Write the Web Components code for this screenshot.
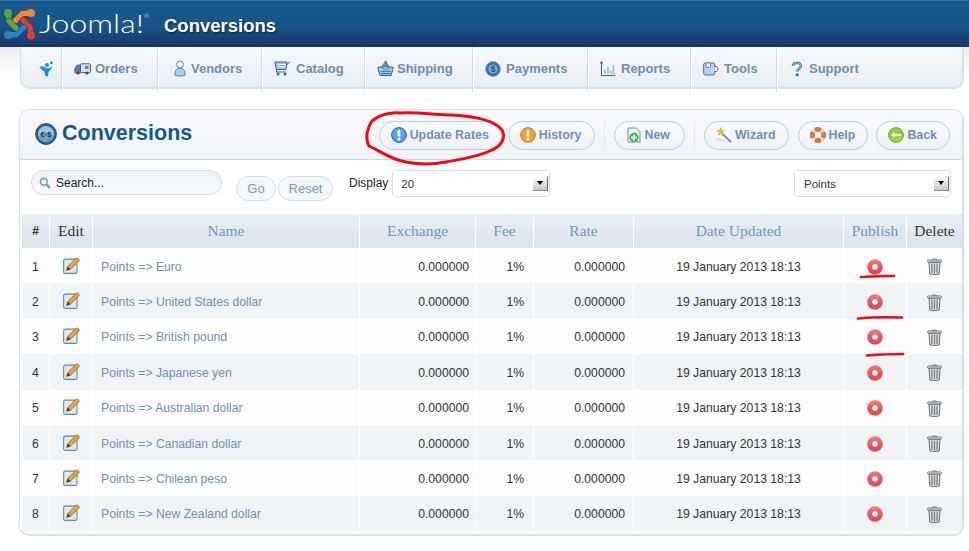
<!DOCTYPE html>
<html>
<head>
<meta charset="utf-8">
<title>Conversions</title>
<style>
  html, body { margin: 0; background: #fff; overflow: hidden; }
  body { font-family: "Liberation Sans", Arial, sans-serif; position: relative; width: 969px; height: 551px; }
</style>
</head>
<body>
<app-page></app-page>
<script>
const LOGO_PIECES = [
  ['M8 9 L9 17 L16 24', '#5aa63c'],
  ['M31 9 L22.5 9.5 L15.5 16.5', '#f08a2c'],
  ['M31 31 L30 23 L23 16', '#df3b3a'],
  ['M8 31 L16.5 30.5 L23.5 23.5', '#2e80c2'],
  ['M9 17 L16 24', '#5aa63c']
];

const ICONS = {
  logo: `<svg viewBox="4 5 31 31" fill="none" stroke-linecap="round" stroke-linejoin="round">
    ${LOGO_PIECES.map(([d, c]) => `<path d="${d}" stroke="#15477a" stroke-width="6.2"/><path d="${d}" stroke="${c}" stroke-width="5.4"/>`).join('')}
    <circle cx="8" cy="9" r="4" fill="#5aa63c"/><circle cx="31" cy="9" r="4" fill="#f08a2c"/>
    <circle cx="31" cy="31.5" r="4" fill="#df3b3a"/><circle cx="8" cy="31" r="4" fill="#2e80c2"/></svg>`,
  home: `<svg viewBox="0 0 14 16"><circle cx="8" cy="4" r="2" fill="#1690d8"/><circle cx="12.4" cy="1.8" r="1.4" fill="#1690d8"/><path d="M.6 6 C3 4.6 5 5.6 7.2 7 C9 7.6 11 7 13.4 5.4 C12.6 8 11 9.6 9.6 10.4 L9 15.6 L6.2 15 L5.4 10.6 C3.6 9.6 1.8 8 .6 6Z" fill="#1690d8"/></svg>`,
  orders: `<svg viewBox="0 0 17 12"><path d="M.5 6 L3 2 H6.5 V10 H1 Z" fill="#5f7f9f" stroke="#47617c" stroke-width=".7"/><rect x="6.5" y=".8" width="10" height="8.8" rx="1" fill="#d6e3ef" stroke="#3f6286"/><rect x="11" y="3" width="3.5" height="3" fill="#5a82a8"/><circle cx="4" cy="10" r="1.6" fill="#334b63"/><circle cx="13" cy="10" r="1.6" fill="#334b63"/></svg>`,
  vendors: `<svg viewBox="0 0 12 17"><circle cx="6" cy="4.4" r="3.4" fill="#e8f1f8" stroke="#5c8cb8"/><path d="M1 15 C.5 10 3 8.2 6 8.2 C9 8.2 11.5 10 11 15 C9 16.4 3 16.4 1 15Z" fill="#a9cdea" stroke="#4f86b8"/></svg>`,
  catalog: `<svg viewBox="0 0 17 15"><path d="M.8 1 H13 L12 8.5 H2.4 Z" fill="#9cc0de" stroke="#38678f"/><path d="M3 3.4 H12 M3.2 6 H11.6" stroke="#fff" stroke-width=".9"/><path d="M13 3.5 L16 .8" stroke="#38678f" fill="none"/><path d="M2.5 8.5 V11 H12" stroke="#38678f" fill="none"/><circle cx="4" cy="13" r="1.5" fill="#38678f"/><circle cx="11" cy="13" r="1.5" fill="#38678f"/></svg>`,
  shipping: `<svg viewBox="0 0 17 17"><path d="M8.5 .8 L12 7 H5 Z" fill="#5d8fbc" stroke="#2f5f8b" stroke-width=".7"/><path d="M.7 7.5 L4 6.8 L8.5 9.5 L13 6.8 L16.3 7.5 L14 15.5 H3Z" fill="#9cc4e4" stroke="#2f5f8b"/><path d="M3.5 11.5 H13.5 M4 13.5 H13" stroke="#2f5f8b" stroke-width=".8"/></svg>`,
  payments: `<svg viewBox="0 0 16 16"><circle cx="8" cy="8" r="7.4" fill="#3f76a6" stroke="#6f96b8" stroke-dasharray="1.4 .9"/><circle cx="8" cy="8" r="5" fill="#7fb0d8" stroke="#2d5f8c" stroke-width=".7"/><text x="8" y="11" font-size="8.5" font-weight="bold" text-anchor="middle" fill="#1e4b74" font-family="Liberation Sans">$</text></svg>`,
  reports: `<svg viewBox="0 0 16 16" fill="none" stroke="#3f6c96" stroke-width="1.1"><path d="M1.5 1 V14.5 H15"/><path d="M.3 2.4 L1.5 .8 L2.7 2.4"/><path d="M5 13 V8.5 M8 13 V6 M11 13 V9.5 M13.5 13 V4" stroke="#8db7da" stroke-width="1.4"/></svg>`,
  tools: `<svg viewBox="0 0 16 14"><rect x=".7" y="1" width="11" height="12" rx="1.6" fill="#b9d6ee" stroke="#3f6f9c"/><rect x="3" y="1" width="4.5" height="4.5" rx="1" fill="#fff" stroke="#3f6f9c" stroke-width=".8"/><path d="M11.5 4.5 H13 C15.8 4.5 15.8 9.5 13 9.5 H11.5" fill="#e8f1f8" stroke="#3f6f9c"/></svg>`,
  support: `<svg viewBox="0 0 12 16" fill="none"><path d="M2 5 C2 1 10 .6 10 4.8 C10 7.5 6.2 7.4 6.2 10.6" stroke="#3f6f9c" stroke-width="2.4"/><path d="M2 5 C2 1 10 .6 10 4.8 C10 7.5 6.2 7.4 6.2 10.6" stroke="#b9d6ee" stroke-width=".8"/><circle cx="6.2" cy="13.8" r="1.6" fill="#3f6f9c"/></svg>`,
  convert: `<svg viewBox="0 0 22 22"><circle cx="11" cy="11" r="10.4" fill="#2d5f8e" stroke="#1c4a73"/><circle cx="11" cy="11" r="8" fill="#9fc3e2"/><ellipse cx="11" cy="14" rx="7" ry="4.5" fill="#6f9fc8"/><text x="11" y="14" font-size="7.5" font-weight="bold" text-anchor="middle" fill="#123a5e" font-family="Liberation Sans">€·$</text></svg>`,
  infoBlue: `<svg viewBox="0 0 16 16"><circle cx="8" cy="8" r="7.4" fill="#5aa2ea" stroke="#1c5ea6"/><rect x="6.6" y="2.8" width="2.8" height="6.6" rx="1.2" fill="#fff"/><circle cx="8" cy="11.9" r="1.5" fill="#fff"/></svg>`,
  infoOrange: `<svg viewBox="0 0 16 16"><circle cx="8" cy="8" r="7.4" fill="#f5a02e" stroke="#d67a12"/><rect x="6.6" y="2.8" width="2.8" height="6.6" rx="1.2" fill="#fff"/><circle cx="8" cy="11.9" r="1.5" fill="#fff"/></svg>`,
  newDoc: `<svg viewBox="0 0 14 16"><path d="M1 1 H9.5 L13 4.5 V15 H1Z" fill="#eaf1f7" stroke="#6c8cab"/><circle cx="7" cy="10.4" r="4.6" fill="#3fb34a"/><path d="M7 7.4 V13.4 M4 10.4 H10" stroke="#e8f8e4" stroke-width="2"/></svg>`,
  wizard: `<svg viewBox="0 0 16 16"><path d="M6 6.5 L15 15" stroke="#8a929b" stroke-width="2.2"/><path d="M4.8 .6 L5.8 3.2 L8.6 3.4 L6.4 5.2 L7.2 7.9 L4.8 6.4 L2.4 7.9 L3.2 5.2 L1 3.4 L3.8 3.2Z" fill="#f0c030" stroke="#c58f1b" stroke-width=".5"/><path d="M.5 12 L9 14" stroke="#d8dde2" stroke-width="2"/></svg>`,
  help: `<svg viewBox="0 0 16 16"><circle cx="8" cy="8" r="5.6" fill="none" stroke="#b9a79c" stroke-width="4"/><circle cx="8" cy="8" r="5.6" fill="none" stroke="#f3ece7" stroke-width="2.6"/><g fill="#df7638" stroke="#b6572a" stroke-width=".5"><rect x="5.2" y=".5" width="5.6" height="3.8" rx="1"/><rect x="5.2" y="11.7" width="5.6" height="3.8" rx="1"/><rect x=".5" y="5.2" width="3.8" height="5.6" rx="1"/><rect x="11.7" y="5.2" width="3.8" height="5.6" rx="1"/></g></svg>`,
  back: `<svg viewBox="0 0 16 16"><circle cx="8" cy="8" r="7.4" fill="#95d23c" stroke="#66a81f"/><path d="M3 8 L6.6 5 V6.9 H13 V9.1 H6.6 V11Z" fill="#f2f9e2"/></svg>`,
  search: `<svg viewBox="0 0 12 12" fill="none" stroke="#7f9ab8"><circle cx="4.8" cy="4.8" r="3.4" stroke-width="1.6"/><path d="M7.5 7.5 L11 11" stroke-width="2.2"/></svg>`,
  edit: `<svg viewBox="0 0 16 16"><rect x=".6" y="2" width="12.6" height="13.4" rx="1.6" fill="#dbe9f5" stroke="#5d87ad"/><path d="M3.4 12.6 L4.4 9 L12.4 1 C13.4 .2 15.9 2.4 15.2 3.6 L7 11.6Z" fill="#e3a23a" stroke="#9a6412" stroke-width=".7"/><path d="M3.4 12.6 L4.4 9 L7 11.6Z" fill="#5b3a10"/></svg>`,
  publish: `<svg viewBox="0 0 16 16"><defs><linearGradient id="pub" x1="0" y1="0" x2="0" y2="1"><stop offset="0" stop-color="#e98083"/><stop offset=".6" stop-color="#e2555a"/><stop offset="1" stop-color="#dd4a50"/></linearGradient></defs><circle cx="8" cy="8" r="7.8" fill="url(#pub)"/><circle cx="8" cy="8" r="2.7" fill="#fff"/></svg>`,
  trash: `<svg viewBox="0 0 15 17"><path d="M5 2 C5 .5 10 .5 10 2" fill="none" stroke="#555" stroke-width=".8"/><rect x=".6" y="2" width="13.8" height="2.2" rx=".8" fill="#f0f2f4" stroke="#50565c" stroke-width=".8"/><path d="M2 4.2 H13 L12.2 16 C10 16.6 5 16.6 2.8 16Z" fill="#e6e9ec" stroke="#3f454b" stroke-width=".8"/><path d="M4.8 5.5 L5 15 M7.5 5.5 V15.3 M10.2 5.5 L10 15" stroke="#767d85" stroke-width="1.4"/></svg>`
};

class UiIcon extends HTMLElement {
  constructor() {
    super();
    const size = this.getAttribute('size') || '16';
    const height = this.getAttribute('height') || size;
    this.attachShadow({ mode: 'open' }).innerHTML = `
      <style>
        :host { display: inline-flex; flex: none; width: ${size}px; height: ${height}px; }
        svg { width: 100%; height: 100%; display: block; overflow: visible; }
      </style>
      ${ICONS[this.getAttribute('name')]}`;
  }
}
customElements.define('ui-icon', UiIcon);

class TopBar extends HTMLElement {
  constructor() {
    super();
    this.attachShadow({ mode: 'open' }).innerHTML = `
      <style>
        :host { display: flex; align-items: center; height: 47px; box-sizing: border-box; padding-left: 4px;
          background: linear-gradient(#18598f, #175587 55%, #1c3469); border-top: 1px solid #3b6c94; }
        .mark { color: #fff; font: 300 25px/1 Lato, sans-serif; margin-left: 4px; width: 125px; white-space: nowrap; position: relative; top: -1px;
          transform: scaleX(1.28); transform-origin: 0 50%; }
        .mark sup { font-size: 5px; vertical-align: 15px; line-height: 0; }
        h1 { margin: 0; color: #fff; font: bold 18.5px "Liberation Sans", sans-serif; text-shadow: 1px 1px 2px #0a2240; position: relative; top: 2px; }
      </style>
      <ui-icon name="logo" size="31"></ui-icon>
      <span class="mark">Joomla!<sup>®</sup></span>
      <h1><slot></slot></h1>`;
  }
}
customElements.define('top-bar', TopBar);

class MainNav extends HTMLElement {
  constructor() {
    super();
    this.attachShadow({ mode: 'open' }).innerHTML = `
      <style>
        :host { display: block; height: 42px; padding: 0 5px 0 20px; background: linear-gradient(#eee, #fff 30px); }
        nav { display: flex; height: 42px; box-sizing: border-box; background: linear-gradient(#f7f9fb, #e9eef4);
          border: 2px solid #d6e0e9; border-width: 0 2px 2px 1px; border-radius: 0 0 10px 10px; }
      </style>
      <nav><slot></slot></nav>`;
  }
}
customElements.define('main-nav', MainNav);

class NavItem extends HTMLElement {
  constructor() {
    super();
    const icon = this.getAttribute('icon');
    const w = this.getAttribute('w') || 16;
    const h = this.getAttribute('h') || 16;
    this.attachShadow({ mode: 'open' }).innerHTML = `
      <style>
        :host { display: flex; align-items: center; box-sizing: border-box; height: 45px; padding-bottom: 2px; gap: ${this.getAttribute('gap') || 5}px;
          width: ${this.getAttribute('width')}px; padding-left: ${this.getAttribute('pad')}px;
          border-right: 1px solid #d4dee8; box-shadow: 1px 0 0 #fff;
          color: #6c8cb3; font: bold 13px "Liberation Sans", sans-serif; }
      </style>
      <ui-icon name="${icon}" size="${w}" height="${h}"></ui-icon><slot></slot>`;
  }
}
customElements.define('nav-item', NavItem);

class PanelBox extends HTMLElement {
  constructor() {
    super();
    this.attachShadow({ mode: 'open' }).innerHTML = `
      <style>
        :host { display: block; box-sizing: border-box; width: 945px; height: 427px; margin: 20px 0 0 19px; overflow: hidden;
          border: 1px solid #d6e0ea; border-width: 1px 2px 2px 1px; border-radius: 10px; background: #fff; }
      </style>
      <slot></slot>`;
  }
}
customElements.define('panel-box', PanelBox);

class TitleBar extends HTMLElement {
  constructor() {
    super();
    this.attachShadow({ mode: 'open' }).innerHTML = `
      <style>
        :host { display: flex; align-items: center; box-sizing: border-box; height: 50px; padding: 0 12px 0 15px;
          background: linear-gradient(#f7f8fb, #f1f4f8); border-bottom: 1px solid #d3dde8; }
        h2 { margin: 0 auto 0 5px; color: #0f5b90; font: bold 21.5px "Liberation Sans", sans-serif; position: relative; top: -1px; }
        ui-icon { position: relative; top: -1px; }
        .tools { display: flex; align-items: center; }
      </style>
      <ui-icon name="convert" size="22"></ui-icon>
      <h2>${this.getAttribute('heading')}</h2>
      <div class="tools"><slot></slot></div>`;
  }
}
customElements.define('title-bar', TitleBar);

class ToolButton extends HTMLElement {
  constructor() {
    super();
    this.attachShadow({ mode: 'open' }).innerHTML = `
      <style>
        :host { display: flex; align-items: center; gap: 3px; box-sizing: border-box; height: 29px; margin-top: 1px; padding: 0 12px 0 11px;
          border: 1px solid #bccfe1; border-radius: 15px; background: linear-gradient(#fafbfd, #edf2f7);
          color: #6f8fb6; font: bold 12.4px "Liberation Sans", sans-serif; white-space: nowrap; }
      </style>
      <ui-icon name="${this.getAttribute('icon')}" size="16"></ui-icon><slot></slot>`;
  }
}
customElements.define('tool-button', ToolButton);

class ToolGap extends HTMLElement {
  constructor() {
    super();
    this.attachShadow({ mode: 'open' }).innerHTML = `
      <style>
        :host { display: block; width: 1px; height: 29px; background: #dfe6ee; margin: 1px 9px 0; }
      </style>`;
  }
}
customElements.define('tool-gap', ToolGap);

class FilterBar extends HTMLElement {
  constructor() {
    super();
    this.attachShadow({ mode: 'open' }).innerHTML = `
      <style>
        :host { display: flex; align-items: flex-start; box-sizing: border-box; height: 54px; padding: 10px 11px 0 11px;
          color: #222; font: 12px "Liberation Sans", sans-serif; }
        .search { display: flex; align-items: center; gap: 5px; box-sizing: border-box; width: 191px; height: 25px; padding-left: 7px; margin-right: 14px;
          border: 1px solid #cfdbe8; border-radius: 13px; background: linear-gradient(#eef3f8, #f7f9fc); }
        .pill { box-sizing: border-box; height: 25px; margin-top: 6px; border: 1px solid #d3deea; border-radius: 13px; padding-top: 4px; text-align: center;
          color: #7a98bc; background: #f3f6fa; font-size: 13px; }
        .label { margin: 6px 4px 0 16px; }
        .spacer { flex: 1; }
      </style>
      <div class="search"><ui-icon name="search" size="12"></ui-icon><span>Search...</span></div>
      <div class="pill" style="width:40px;margin-right:2px">Go</div>
      <div class="pill" style="width:55px">Reset</div>
      <span class="label">Display</span>
      <fake-select width="158" pad="8">20</fake-select>
      <div class="spacer"></div>
      <fake-select width="157" pad="9">Points</fake-select>`;
  }
}
customElements.define('filter-bar', FilterBar);

class FakeSelect extends HTMLElement {
  constructor() {
    super();
    this.attachShadow({ mode: 'open' }).innerHTML = `
      <style>
        :host { display: flex; align-items: center; box-sizing: border-box; height: 27px; width: ${this.getAttribute('width')}px;
          padding: 0 1px 0 ${this.getAttribute('pad')}px; border: 1px solid #d6e0ea; border-radius: 3px; background: #fff;
          color: #333; font: 11.5px "Liberation Sans", sans-serif; }
        .txt { flex: 1; padding-top: 1px; }
        .arrow { display: flex; align-items: center; justify-content: center; width: 15px; height: 14px; box-sizing: border-box;
          background: linear-gradient(#fdfdfd, #c9c9c9); border-right: 1px solid #666; border-bottom: 1px solid #888; }
        .arrow i { border: 3.5px solid transparent; border-top: 4px solid #000; border-bottom: 0; }
      </style>
      <span class="txt"><slot></slot></span><span class="arrow"><i></i></span>`;
  }
}
customElements.define('fake-select', FakeSelect);

class ConvTable extends HTMLElement {
  constructor() {
    super();
    this.attachShadow({ mode: 'open' }).innerHTML = `
      <style>
        :host { display: block; margin-left: 2px; width: 940px;
          --cols: 27px 42px 266px 115px 57px 99px 209px 62px 55px; }
      </style>
      <slot></slot>`;
  }
}
customElements.define('conv-table', ConvTable);

class ConvHead extends HTMLElement {
  constructor() {
    super();
    const cols = [['#', 0, 1], ['Edit', 0], ['Name', 1], ['Exchange', 1], ['Fee', 1], ['Rate', 1], ['Date Updated', 1], ['Publish', 1], ['Delete', 0]];
    this.attachShadow({ mode: 'open' }).innerHTML = `
      <style>
        :host { display: grid; grid-template-columns: var(--cols); column-gap: 1px; height: 34px; }
        div { display: flex; align-items: center; justify-content: center; background: linear-gradient(#e8eff6, #d9e4ef);
          font: 15.5px "Liberation Serif", serif; color: #333; }
        .link { color: #7394b8; }
        .hash { font: bold 12px "Liberation Sans", sans-serif; }
      </style>
      ${cols.map(([t, link, hash]) => `<div class="${link ? 'link' : ''} ${hash ? 'hash' : ''}">${t}</div>`).join('')}`;
  }
}
customElements.define('conv-head', ConvHead);

class ConvRow extends HTMLElement {
  constructor() {
    super();
    const num = +this.getAttribute('num');
    const bg = num % 2 ? '#fdfdfd' : '#f0f4f7';
    this.attachShadow({ mode: 'open' }).innerHTML = `
      <style>
        :host { display: grid; grid-template-columns: var(--cols); column-gap: 1px; height: 35.375px;
          color: #333; font: 12.2px "Liberation Sans", sans-serif; }
        div { display: flex; align-items: center; background: ${bg}; padding-top: 2px; box-sizing: border-box; min-width: 0; }
        .c { justify-content: center; }
        .r { justify-content: flex-end; padding-right: 8px; }
        .name { color: #6f8fb6; padding-left: 8px; }
        .ic { padding-top: 0; padding-bottom: 1px; }
        .low { padding-top: 2px; padding-bottom: 0; }
      </style>
      <div class="c">${num}</div>
      <div class="c ic"><ui-icon name="edit" size="17"></ui-icon></div>
      <div class="name">Points =&gt; ${this.getAttribute('name')}</div>
      <div class="r" style="padding-right:6px">0.000000</div>
      <div class="r" style="padding-right:9px">1%</div>
      <div class="r">0.000000</div>
      <div class="c">19 January 2013 18:13</div>
      <div class="c ic low"><ui-icon name="publish" size="16"></ui-icon></div>
      <div class="c ic low"><ui-icon name="trash" size="15" height="17"></ui-icon></div>`;
  }
}
customElements.define('conv-row', ConvRow);

// hand drawn red marks lying over the page
class RedMarks extends HTMLElement {
  constructor() {
    super();
    this.attachShadow({ mode: 'open' }).innerHTML = `
      <style>
        :host { position: absolute; left: 0; top: 0; width: 969px; height: 551px; pointer-events: none; }
        svg { display: block; }
        path { fill: none; stroke: #ee0a12; stroke-linecap: round; stroke-linejoin: round; }
      </style>
      <svg width="969" height="551">
        <path stroke-width="3" d="M400 113 C420 112 436 115 452 115 C472 116 494 120 502 130 C506 137 502 146 492 150 C478 157 462 159 446 162 C430 165 412 164 398 160 C386 156 378 150 369 146 C365 138 367 128 372 121 C379 115 390 112 400 113"/>
        <path stroke-width="2.6" d="M861 277 C872 276.5 884 276 894 276"/>
        <path stroke-width="2.6" d="M858 318.5 C872 317 888 317 902 317.5"/>
        <path stroke-width="2.6" d="M867 355.5 C880 354.5 892 354 903 354"/>
      </svg>`;
  }
}
customElements.define('red-marks', RedMarks);

class AppPage extends HTMLElement {
  constructor() {
    super();
    const names = ['Euro', 'United States dollar', 'British pound', 'Japanese yen', 'Australian dollar', 'Canadian dollar', 'Chilean peso', 'New Zealand dollar'];
    const nav = [
      ['home', '', 41, 18, 14, 16, 5],
      ['orders', 'Orders', 96, 12, 17, 12, 4],
      ['vendors', 'Vendors', 104, 16, 12, 17, 5],
      ['catalog', 'Catalog', 103, 12, 17, 15, 5],
      ['shipping', 'Shipping', 108, 12, 17, 17, 3],
      ['payments', 'Payments', 115, 12, 16, 16, 5],
      ['reports', 'Reports', 103, 12, 16, 16, 5],
      ['tools', 'Tools', 86, 12, 16, 14, 5],
      ['support', 'Support', 90, 14, 12, 16, 6]
    ];
    this.attachShadow({ mode: 'open' }).innerHTML = `
      <style>:host { display: block; }</style>
      <top-bar>Conversions</top-bar>
      <main-nav>
        ${nav.map(([icon, t, width, pad, w, h, gap], i) => `<nav-item icon="${icon}" width="${width}" pad="${pad}" w="${w}" h="${h}" gap="${gap}" ${i === 8 ? 'style="border-right:0;box-shadow:none"' : ''}>${t}</nav-item>`).join('')}
      </main-nav>
      <panel-box>
        <title-bar heading="Conversions">
          <tool-button icon="infoBlue">Update Rates</tool-button>
          <tool-button icon="infoOrange" style="margin-left:6px">History</tool-button>
          <tool-gap></tool-gap>
          <tool-button icon="newDoc" style="padding-right:14px">New</tool-button>
          <tool-gap></tool-gap>
          <tool-button icon="wizard">Wizard</tool-button>
          <tool-button icon="help" style="margin-left:9px">Help</tool-button>
          <tool-button icon="back" style="margin-left:8px">Back</tool-button>
        </title-bar>
        <filter-bar></filter-bar>
        <conv-table>
          <conv-head></conv-head>
          ${names.map((n, i) => `<conv-row num="${i + 1}" name="${n}"></conv-row>`).join('')}
        </conv-table>
      </panel-box>
      <red-marks></red-marks>`;
  }
}
customElements.define('app-page', AppPage);
</script>
</body>
</html>
